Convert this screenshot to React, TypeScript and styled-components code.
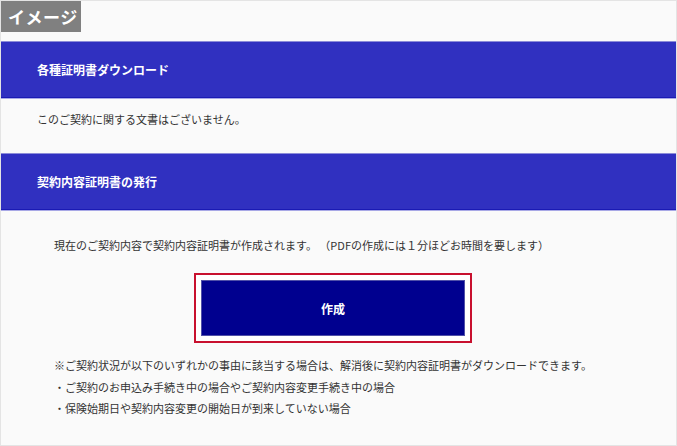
import { FC } from "react"
import styled, { createGlobalStyle } from "styled-components"

const GlobalStyle = createGlobalStyle`
  html, body {
    margin: 0;
    padding: 0;
    background: #ffffff;
  }

  body {
    font-family: "Noto Sans CJK JP", "Noto Sans", sans-serif;
    color: #333333;
  }
`

const Frame = styled.div`
  box-sizing: border-box;
  width: 677px;
  height: 446px;
  background: #fafafa;
  border: 1px solid #e4e4e4;
  display: flex;
  flex-direction: column;
`

const Badge = styled.div`
  align-self: flex-start;
  width: 80px;
  height: 31px;
  background: #808080;
  color: #ffffff;
  font-size: 17px;
  font-weight: 700;
  line-height: 31px;
  padding-left: 7px;
  box-sizing: border-box;
  letter-spacing: 0.5px;
  margin-bottom: 9px;
`

const SectionHeader = styled.h2`
  margin: 0;
  height: 57px;
  box-sizing: border-box;
  background: #3030c0;
  border-top: 1px solid #8c8cd8;
  border-bottom: 1px solid #1a1ab4;
  box-shadow: 0 1px 0 #a8a8e6;
  color: #ffffff;
  font-size: 12px;
  font-weight: 700;
  display: flex;
  align-items: center;
  padding-left: 36px;
`

const SectionBody = styled.div<{ $indent: number; $top: number; $bottom: number }>`
  padding: ${(p) => p.$top}px 20px ${(p) => p.$bottom}px ${(p) => p.$indent}px;
  font-size: 11px;
  line-height: 20px;
`

const Text = styled.p`
  margin: 0;
`

const ButtonRow = styled.div`
  display: flex;
  justify-content: center;
  padding-right: 44px;
  margin: 18px 0 12px;
`

const FocusRing = styled.div`
  border: 2px solid #c8102e;
  padding: 5px;
  background: #ffffff;
`

const CreateButton = styled.button`
  width: 264px;
  height: 56px;
  background: #00008f;
  border: 1px solid #5050a8;
  color: #ffffff;
  font-family: inherit;
  font-size: 12px;
  font-weight: 700;
  cursor: pointer;
`

const Notes = styled.ul`
  list-style: none;
  margin: 0;
  padding: 0;
  line-height: 21.5px;
`

const App: FC = () => {
  return (
    <>
      <GlobalStyle />
      <Frame>
        <Badge>イメージ</Badge>

        <SectionHeader>各種証明書ダウンロード</SectionHeader>
        <SectionBody $indent={36} $top={11} $bottom={24}>
          <Text>このご契約に関する文書はございません。</Text>
        </SectionBody>

        <SectionHeader>契約内容証明書の発行</SectionHeader>
        <SectionBody $indent={53} $top={25} $bottom={0}>
          <Text>
            現在のご契約内容で契約内容証明書が作成されます。 （PDFの作成には１分ほどお時間を要します）
          </Text>
          <ButtonRow>
            <FocusRing>
              <CreateButton>作成</CreateButton>
            </FocusRing>
          </ButtonRow>
          <Notes>
            <li>※ご契約状況が以下のいずれかの事由に該当する場合は、解消後に契約内容証明書がダウンロードできます。</li>
            <li>・ご契約のお申込み手続き中の場合やご契約内容変更手続き中の場合</li>
            <li>・保険始期日や契約内容変更の開始日が到来していない場合</li>
          </Notes>
        </SectionBody>
      </Frame>
    </>
  )
}

export default App
